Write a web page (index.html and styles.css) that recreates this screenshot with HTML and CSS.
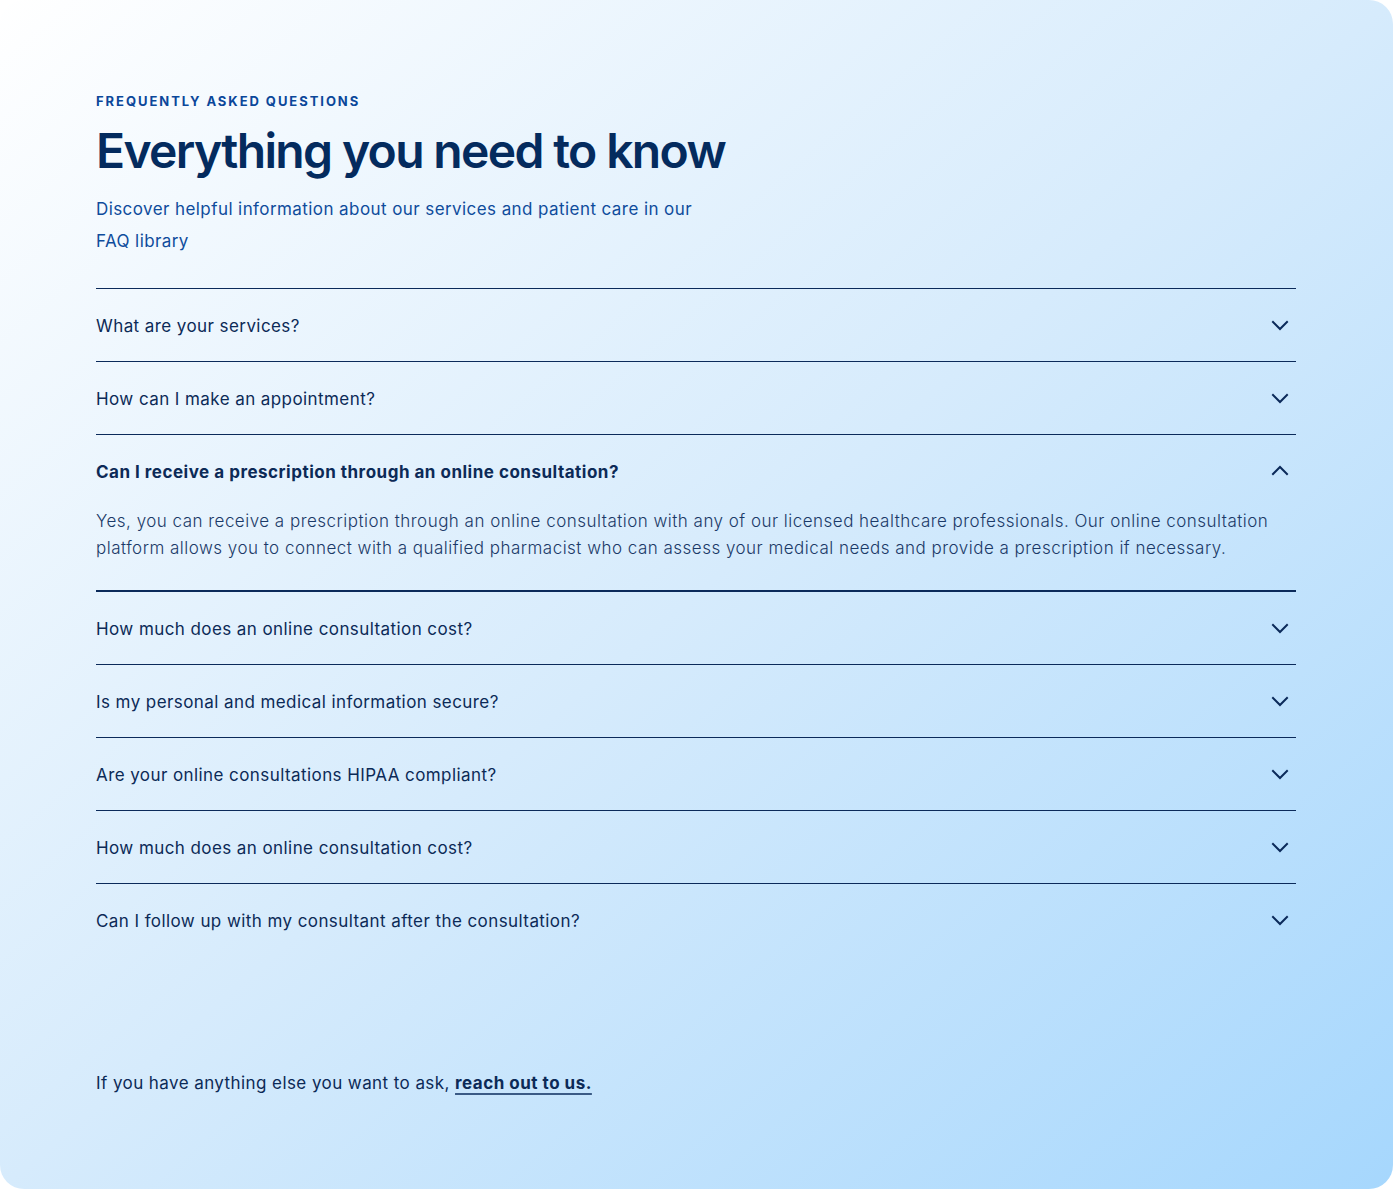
FILE: index.html
```html
<!DOCTYPE html>
<html lang="en">
<head>
<meta charset="utf-8">
<title>FAQ</title>
<link rel="stylesheet" href="styles.css">
</head>
<body>
<section class="faq">
  <div class="intro">
    <p class="eyebrow">FREQUENTLY ASKED QUESTIONS</p>
    <h1 class="title">Everything you need to know</h1>
    <p class="lead">Discover helpful information about our services and patient care in our FAQ library</p>
  </div>
  <div class="list">
    <div class="item">
      <div class="q"><span>What are your services?</span><svg class="chev" viewBox="0 0 24 24"><path d="M5 9l7 7 7-7"/></svg></div>
    </div>
    <div class="item">
      <div class="q"><span>How can I make an appointment?</span><svg class="chev" viewBox="0 0 24 24"><path d="M5 9l7 7 7-7"/></svg></div>
    </div>
    <div class="item open">
      <div class="q"><span>Can I receive a prescription through an online consultation?</span><svg class="chev" viewBox="0 0 24 24"><path d="M5 15l7-7 7 7"/></svg></div>
      <p class="a">Yes, you can receive a prescription through an online consultation with any of our licensed healthcare professionals. Our online consultation platform allows you to connect with a qualified pharmacist who can assess your medical needs and provide a prescription if necessary.</p>
    </div>
    <div class="item">
      <div class="q"><span>How much does an online consultation cost?</span><svg class="chev" viewBox="0 0 24 24"><path d="M5 9l7 7 7-7"/></svg></div>
    </div>
    <div class="item">
      <div class="q"><span>Is my personal and medical information secure?</span><svg class="chev" viewBox="0 0 24 24"><path d="M5 9l7 7 7-7"/></svg></div>
    </div>
    <div class="item">
      <div class="q"><span>Are your online consultations HIPAA compliant?</span><svg class="chev" viewBox="0 0 24 24"><path d="M5 9l7 7 7-7"/></svg></div>
    </div>
    <div class="item">
      <div class="q"><span>How much does an online consultation cost?</span><svg class="chev" viewBox="0 0 24 24"><path d="M5 9l7 7 7-7"/></svg></div>
    </div>
    <div class="item last">
      <div class="q"><span>Can I follow up with my consultant after the consultation?</span><svg class="chev" viewBox="0 0 24 24"><path d="M5 9l7 7 7-7"/></svg></div>
    </div>
  </div>
  <p class="footer">If you have anything else you want to ask, <a href="#" class="link">reach out to us.</a></p>
</section>
</body>
</html>
```

FILE: styles.css
```css
html, body {
  margin: 0;
  padding: 0;
  background: #ffffff;
}
body {
  font-family: "Inter", "Liberation Sans", sans-serif;
  color: #0b2858;
  letter-spacing: 0.42px;
}
.faq {
  box-sizing: border-box;
  width: 1393px;
  height: 1189px;
  border-radius: 24px;
  background: linear-gradient(to bottom right, #ffffff 0%, #d6ebfc 50%, #a6d7fd 100%);
  padding: 93px 97px 0 96px;
  display: flex;
  flex-direction: column;
}
.intro {
  margin-bottom: 31px;
}
.eyebrow {
  margin: 0;
  font-size: 13px;
  line-height: 16px;
  font-weight: 700;
  letter-spacing: 1.95px;
  color: #0b479a;
}
.title {
  margin: 12px 0 0 0;
  font-size: 48px;
  line-height: 60px;
  font-weight: 600;
  letter-spacing: -1.65px;
  color: #042b5e;
}
.lead {
  margin: 12px 0 0 0;
  width: 620px;
  font-size: 17px;
  line-height: 32px;
  color: #0f4c9c;
}
.list {
  border-top: 1px solid #0b2a5a;
}
.item {
  border-bottom: 1px solid #0b2a5a;
}
.item.open {
  border-bottom: 2px solid #0b2a5a;
}
.item.last {
  border-bottom: none;
}
.q {
  box-sizing: border-box;
  height: 72px;
  padding-top: 2px;
  display: flex;
  align-items: center;
  justify-content: space-between;
  font-size: 17px;
  color: #0c2a57;
}
.q .chev {
  margin-top: -2px;
}
.open .q {
  font-weight: 700;
  letter-spacing: 0.5px;
}
.chev {
  width: 24px;
  height: 24px;
  margin-right: 4px;
  fill: none;
  stroke: #0b2a5a;
  stroke-width: 2;
  stroke-linecap: square;
}
.a {
  margin: 1px 0 0 0;
  padding-bottom: 28px;
  font-size: 17px;
  line-height: 27px;
  font-weight: 300;
  letter-spacing: 0.48px;
  color: #1b3a68;
}
.footer {
  margin: 114px 0 0 0;
  font-size: 17px;
  line-height: 24px;
  padding-top: 1px;
  color: #0c2a57;
}
.link {
  color: #0c2a57;
  font-weight: 700;
  letter-spacing: 0.5px;
  text-decoration: underline;
  text-decoration-thickness: 2px;
  text-underline-offset: 4px;
  text-decoration-color: #3a5a85;
}
```
